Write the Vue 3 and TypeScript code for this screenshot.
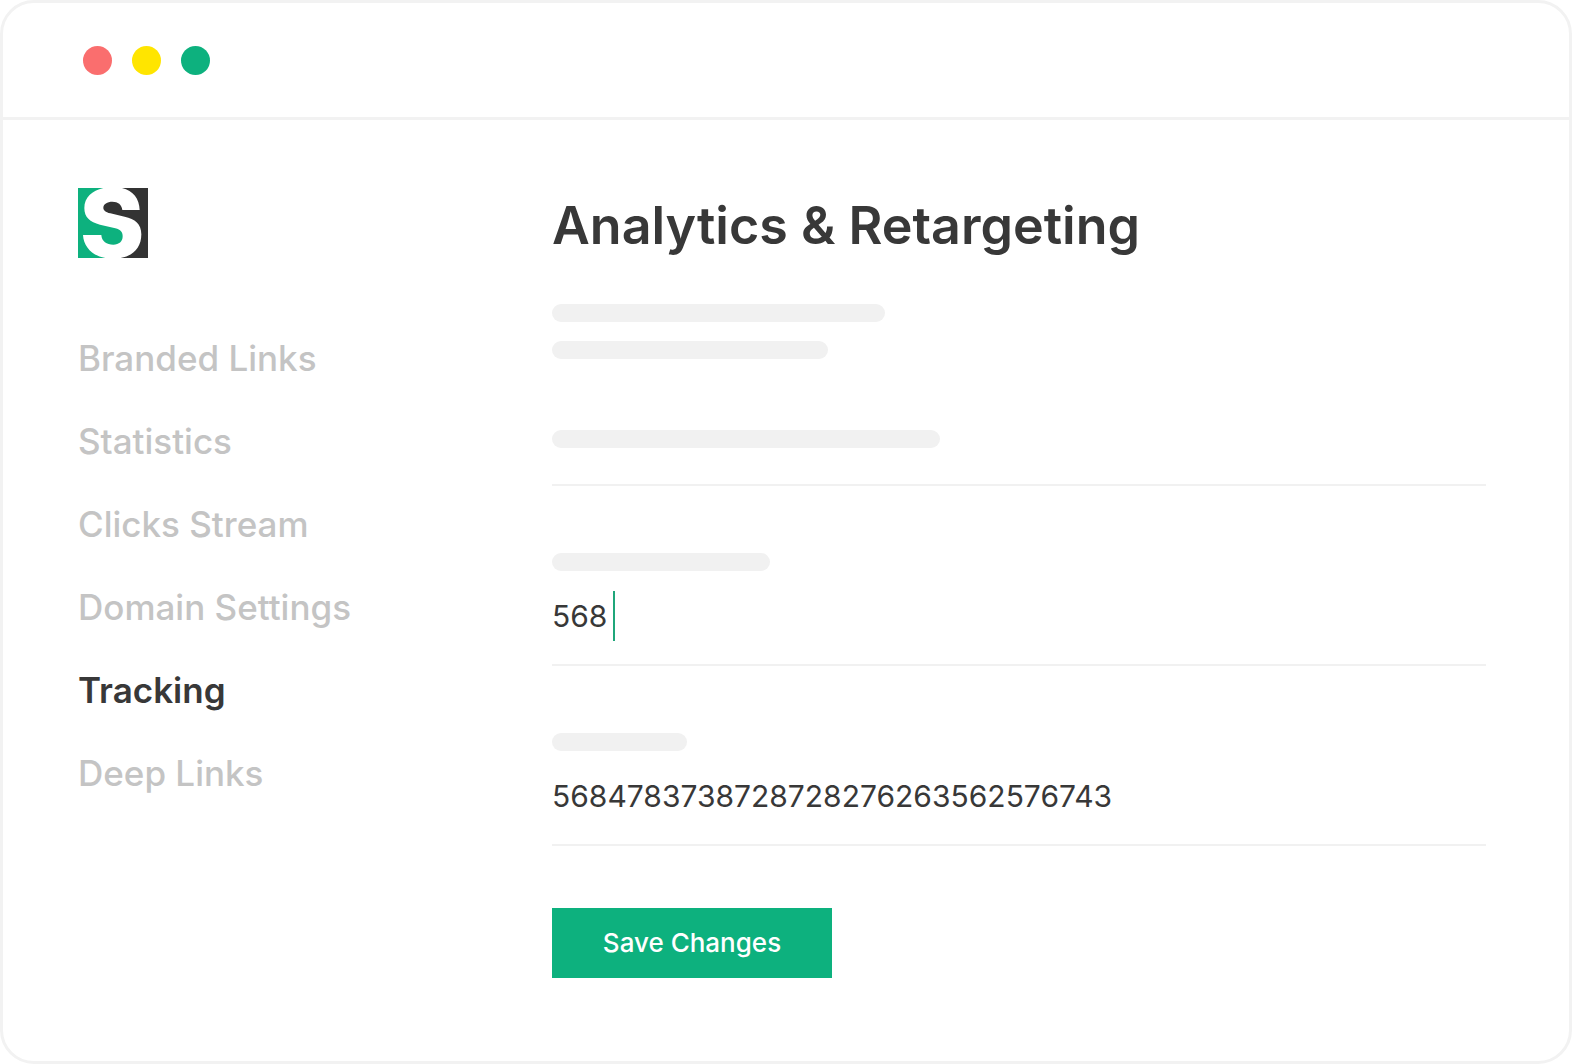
<script setup lang="ts">
import { ref } from 'vue'

interface NavItem {
  label: string
  active?: boolean
}

const navItems: NavItem[] = [
  { label: 'Branded Links' },
  { label: 'Statistics' },
  { label: 'Clicks Stream' },
  { label: 'Domain Settings' },
  { label: 'Tracking', active: true },
  { label: 'Deep Links' },
]

const windowDots: string[] = ['#fa6e6e', '#ffe500', '#0db17e']

const analyticsId = ref('568')
const pixelId = ref('5684783738728728276263562576743')
</script>

<template>
  <div class="window">
    <header class="titlebar">
      <span v-for="color in windowDots" :key="color" class="dot" :style="{ background: color }"></span>
    </header>

    <div class="body">
      <aside class="sidebar">
        <svg class="logo" viewBox="0 0 210 210" role="img" aria-label="Logo">
          <path
            fill="#0db17e"
            d="M0 0H76C42 8 19 28 19 60C19 88 36 102 66 110L112 121C128 125 134 133 134 145C134 161 123 170 106 170C86 170 71 160 70 141H15C17 176 42 203 82 210H0Z"
          />
          <path
            fill="#333333"
            d="M132 0H210V210H128C166 203 190 179 190 139C190 107 171 93 140 86L97 76C82 72 76 67 76 59C76 48 88 41 103 41C120 41 131 49 133 66H185C184 32 166 8 132 0Z"
          />
        </svg>
        <nav class="nav">
          <a
            v-for="item in navItems"
            :key="item.label"
            href="#"
            class="nav-link"
            :class="{ active: item.active }"
            :aria-current="item.active ? 'page' : undefined"
            >{{ item.label }}</a
          >
        </nav>
      </aside>

      <main class="content">
        <h1 class="title">Analytics &amp; Retargeting</h1>

        <div class="intro">
          <div class="bar bar-intro"></div>
          <div class="bar bar-intro-short"></div>
        </div>

        <form class="form" @submit.prevent>
          <div class="section">
            <div class="bar bar-section"></div>
          </div>

          <div class="field">
            <label class="bar bar-first" for="analytics-id"></label>
            <div class="entry">
              <input id="analytics-id" v-model="analyticsId" class="input sized" type="text" aria-label="Analytics ID" />
              <span class="caret"></span>
            </div>
          </div>

          <div class="field">
            <label class="bar bar-second" for="pixel-id"></label>
            <div class="entry">
              <input id="pixel-id" v-model="pixelId" class="input" type="text" aria-label="Pixel ID" />
            </div>
          </div>

          <button class="save" type="submit">Save Changes</button>
        </form>
      </main>
    </div>
  </div>
</template>

<style>
body {
  background: #ffffff;
}
</style>

<style scoped>
.window {
  box-sizing: border-box;
  min-height: 100vh;
  border: 3px solid #f2f2f2;
  border-radius: 34px;
  background: #ffffff;
  color: #383838;
  font-family: Inter, 'Liberation Sans', sans-serif;
}

.titlebar {
  display: flex;
  align-items: center;
  gap: 20px;
  height: 114px;
  padding: 0 80px;
  border-bottom: 3px solid #f2f2f2;
}

.dot {
  width: 29px;
  height: 29px;
  border-radius: 50%;
}

.body {
  display: grid;
  grid-template-columns: 474px 1fr;
  padding: 68px 83px 80px 75px;
}

.logo {
  display: block;
  width: 70px;
  height: 70px;
}

.nav {
  display: flex;
  flex-direction: column;
  align-items: flex-start;
  gap: 40px;
  margin-top: 79px;
}

.nav-link {
  color: #c4c4c4;
  font-size: 35px;
  font-weight: 500;
  line-height: 43px;
  text-decoration: none;
}

.nav-link.active {
  color: #383838;
  font-weight: 600;
}

.title {
  margin: 6px 0 0;
  font-size: 52px;
  font-weight: 600;
  line-height: 64px;
}

.intro {
  display: grid;
  gap: 19px;
  margin-top: 46px;
}

.bar {
  display: block;
  height: 18px;
  border-radius: 9px;
  background: #f1f1f1;
}

.bar-intro {
  width: 333px;
}

.bar-intro-short {
  width: 276px;
}

.bar-section {
  width: 388px;
}

.bar-first {
  width: 218px;
}

.bar-second {
  width: 135px;
}

.section {
  margin-top: 71px;
  padding-bottom: 36px;
  border-bottom: 2px solid #f1f1f1;
}

.field {
  padding-top: 67px;
  border-bottom: 2px solid #f1f1f1;
}

.entry {
  display: flex;
  align-items: center;
  gap: 6px;
  margin-top: 20px;
  padding-bottom: 23px;
}

.input {
  flex: 1;
  min-width: 0;
  height: 50px;
  padding: 0;
  border: 0;
  outline: 0;
  background: none;
  color: #383838;
  font-family: inherit;
  font-size: 30px;
  font-weight: 400;
}

.input.sized {
  flex: none;
  field-sizing: content;
}

.caret {
  width: 2px;
  height: 50px;
  background: #1fa67a;
}

.save {
  display: block;
  width: 280px;
  height: 70px;
  margin-top: 62px;
  padding: 0;
  border: 0;
  background: #0db17e;
  color: #ffffff;
  font-family: inherit;
  font-size: 26px;
  font-weight: 500;
  line-height: 32px;
}
</style>
